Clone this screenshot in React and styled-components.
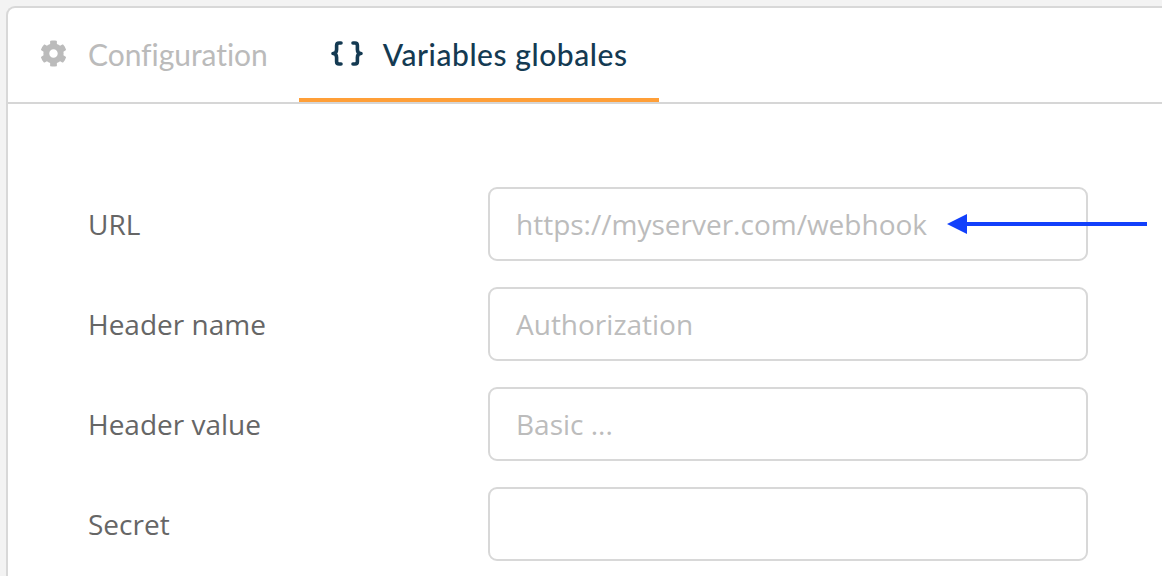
import React from "react";
import styled, { createGlobalStyle } from "styled-components";
import { FaCog } from "react-icons/fa";

const GlobalStyle = createGlobalStyle`
  html, body {
    margin: 0;
    padding: 0;
    height: 100%;
    overflow: hidden;
    background: #f3f3f3;
  }
  * {
    box-sizing: border-box;
  }
`;

const Page = styled.div`
  height: 576px;
  padding: 6px 0 0 6px;
`;

const Card = styled.div`
  position: relative;
  height: 570px;
  background: #fff;
  border: solid #d8d8d8;
  border-width: 2px 0 0 2px;
  border-top-left-radius: 9px;
  overflow: hidden;
`;

const Tabs = styled.div`
  display: flex;
  height: 96px;
  border-bottom: 2px solid #d6d6d6;
`;

const Tab = styled.div`
  display: flex;
  align-items: center;
  gap: ${(p) => (p.$active ? "20px" : "21px")};
  height: 94px;
  padding: 1px 31px 0 32px;
  border-bottom: 4px solid ${(p) => (p.$active ? "#ff9f38" : "transparent")};
  color: ${(p) => (p.$active ? "#143a52" : "#bbbbbb")};
  font-family: "Lato", "Open Sans", sans-serif;
  font-size: 30px;
  font-weight: ${(p) => (p.$active ? 500 : 400)};
  letter-spacing: ${(p) => (p.$active ? "0.55px" : "-0.05px")};
  white-space: nowrap;

  svg {
    flex-shrink: 0;
    margin-top: -1px;
  }
`;

const Form = styled.div`
  display: grid;
  grid-template-columns: 400px 600px;
  row-gap: 26px;
  padding: 83px 0 0 80px;
`;

const Label = styled.div`
  display: flex;
  align-items: center;
  color: #666;
  font-family: "Open Sans", sans-serif;
  font-size: 28px;
`;

const Input = styled.div`
  display: flex;
  align-items: center;
  height: 74px;
  padding: 0 26px;
  border: 2px solid #d8d8d8;
  border-radius: 9px;
  color: #bcbcbc;
  font-family: "Open Sans", sans-serif;
  font-size: 28px;
  white-space: nowrap;
`;

const Arrow = styled.svg`
  position: absolute;
  left: 939px;
  top: 204px;
`;

const BracesIcon = () => (
  <svg width="32" height="25" viewBox="0 0 32 25" fill="none" stroke="currentColor" strokeWidth="3.6" strokeLinecap="round" strokeLinejoin="round">
    <path d="M10 2 H8 Q5.6 2 5.6 4.5 V8.5 Q5.6 12.5 2 12.5 Q5.6 12.5 5.6 16.5 V20.5 Q5.6 23 8 23 H10" />
    <path d="M22 2 H24 Q26.4 2 26.4 4.5 V8.5 Q26.4 12.5 30 12.5 Q26.4 12.5 26.4 16.5 V20.5 Q26.4 23 24 23 H22" />
  </svg>
);

const fields = [
  { label: "URL", placeholder: "https://myserver.com/webhook" },
  { label: "Header name", placeholder: "Authorization" },
  { label: "Header value", placeholder: "Basic ..." },
  { label: "Secret", placeholder: "" },
];

export default function App() {
  return (
    <>
      <GlobalStyle />
      <Page>
        <Card>
          <Tabs>
            <Tab>
              <FaCog size={27} />
              Configuration
            </Tab>
            <Tab $active>
              <BracesIcon />
              Variables globales
            </Tab>
          </Tabs>
          <Form>
            {fields.map((f) => (
              <React.Fragment key={f.label}>
                <Label>{f.label}</Label>
                <Input>{f.placeholder}</Input>
              </React.Fragment>
            ))}
          </Form>
          <Arrow width="202" height="24" viewBox="0 0 202 24">
            <path d="M0 12 L20 2 L20 10 L200 10 L200 14 L20 14 L20 22 Z" fill="#1240fb" />
          </Arrow>
        </Card>
      </Page>
    </>
  );
}
